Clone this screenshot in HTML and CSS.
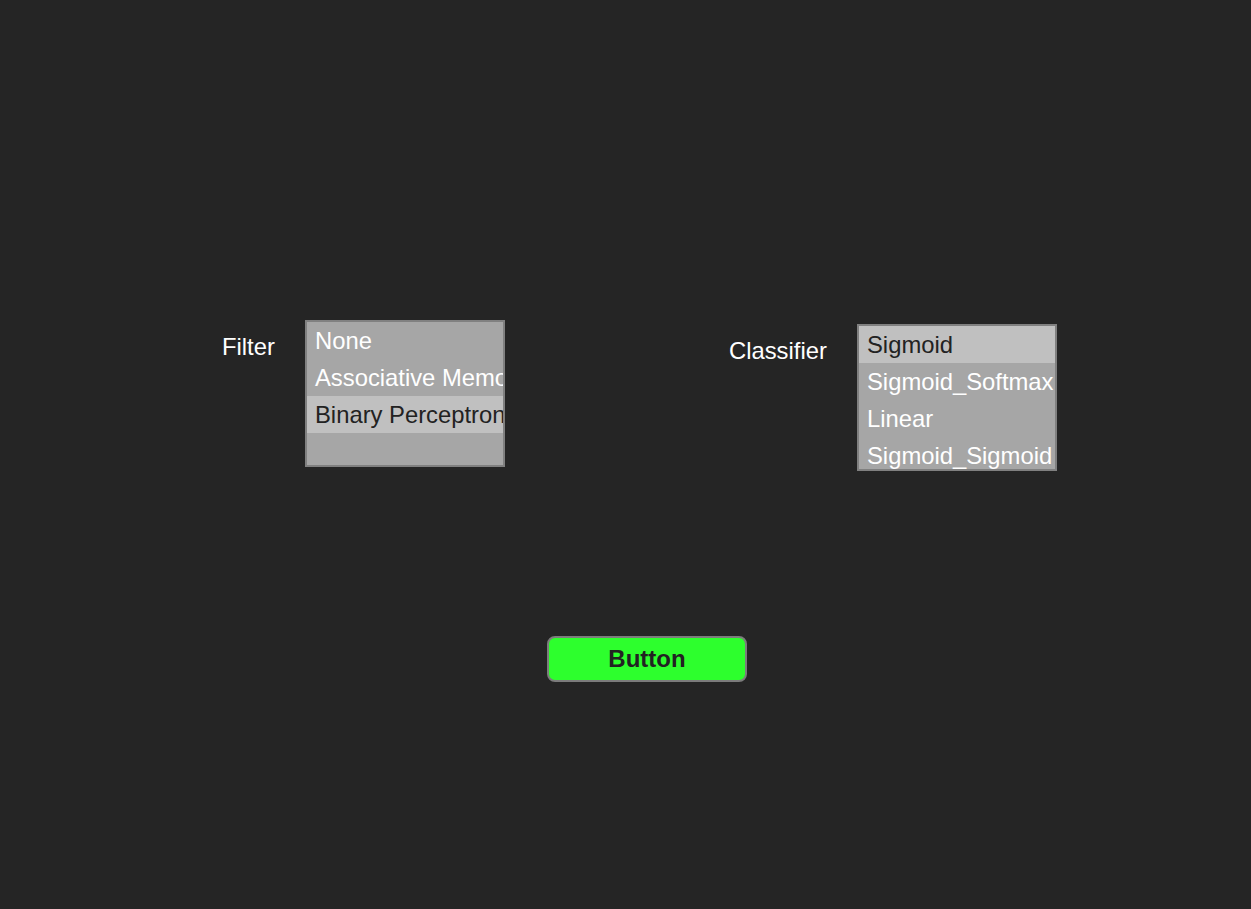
FILE: index.html
```html
<!DOCTYPE html>
<html>
<head>
<meta charset="utf-8">
<link rel="stylesheet" href="styles.css">
</head>
<body>
<div class="page">
  <div class="row">
    <div class="group group-filter">
      <div class="label label-filter">Filter</div>
      <div class="listbox">
        <div class="item">None</div>
        <div class="item">Associative Memory</div>
        <div class="item selected">Binary Perceptron</div>
      </div>
    </div>
    <div class="group group-classifier">
      <div class="label label-classifier">Classifier</div>
      <div class="listbox">
        <div class="item selected">Sigmoid</div>
        <div class="item">Sigmoid_Softmax</div>
        <div class="item">Linear</div>
        <div class="item">Sigmoid_Sigmoid</div>
      </div>
    </div>
  </div>
  <div class="button-row">
    <button class="btn">Button</button>
  </div>
</div>
</body>
</html>
```

FILE: styles.css
```css
html, body {
  margin: 0;
  padding: 0;
  background: #252525;
  height: 100%;
}
body {
  font-family: "Liberation Sans", Arial, sans-serif;
  font-size: 23.8px;
  color: #ffffff;
}
.page {
  width: 1251px;
  height: 909px;
  overflow: hidden;
  box-sizing: border-box;
  padding-top: 320px;
}
.row {
  display: flex;
  align-items: flex-start;
  padding-left: 222px;
}
.group {
  display: flex;
  align-items: flex-start;
}
.group-classifier {
  margin-top: 4px;
  margin-left: 224px;
}
.label {
  line-height: 37px;
  margin-top: 8px;
  white-space: nowrap;
}
.label-filter {
  width: 83px;
  margin-top: 8px;
}
.label-classifier {
  width: 128px;
}
.listbox {
  width: 196px;
  height: 143px;
  border: 2px solid #808080;
  background: #a6a6a6;
  overflow: hidden;
}
.item {
  height: 37px;
  line-height: 37px;
  padding-left: 8px;
  white-space: nowrap;
  overflow: hidden;
  color: #ffffff;
}
.item.selected {
  background: #c0c0c0;
  color: #222222;
}
.button-row {
  padding-left: 547px;
  margin-top: 165px;
}
.btn {
  display: block;
  width: 200px;
  height: 46px;
  box-sizing: border-box;
  border: 2px solid #7c7c7c;
  border-radius: 8px;
  background: #2dff2d;
  color: #222222;
  font-family: "Liberation Sans", Arial, sans-serif;
  font-weight: bold;
  font-size: 24px;
  padding: 0;
  margin: 0;
}
```
